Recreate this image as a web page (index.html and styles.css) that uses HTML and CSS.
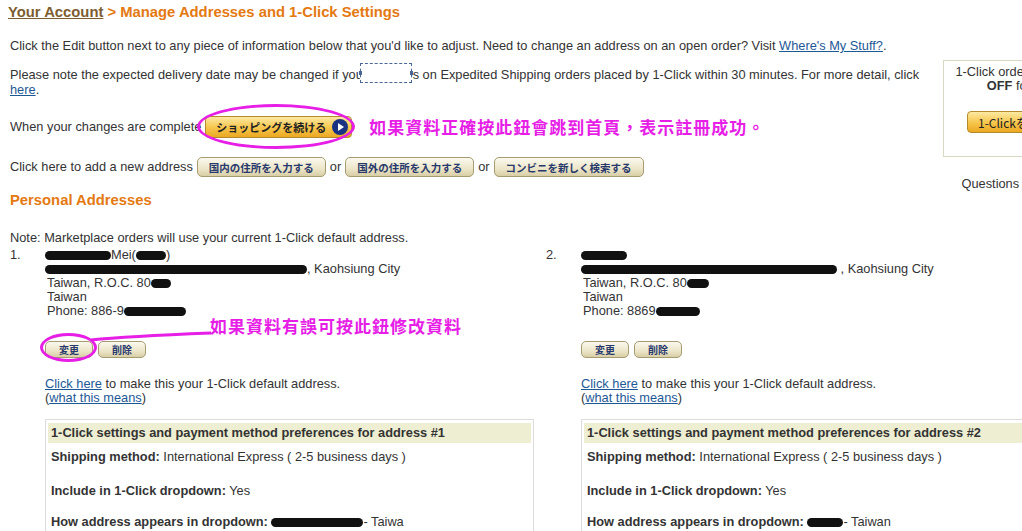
FILE: index.html
```html
<!DOCTYPE html>
<html lang="en">
<head>
    <meta charset="UTF-8">
    <title>Manage Addresses and 1-Click Settings</title>
    <link rel="stylesheet" href="styles.css">
</head>
<body>
<div class="page">

    <h1 class="crumb"><a href="#">Your Account</a> &gt; Manage Addresses and 1-Click Settings</h1>

    <div class="top">
        <div class="main">
            <p class="intro">Click the Edit button next to any piece of information below that you'd like to adjust. Need to change an address on an open order? Visit <a href="#">Where's My Stuff?</a>.</p>

            <p class="intro notice">Please note the expected delivery date may be changed if your changes on Expedited Shipping orders placed by 1-Click within 30 minutes. For more detail, click <a href="#">here</a>.<span class="marquee"></span></p>

            <div class="line done-line">
                <span>When your changes are complete</span>
                <span class="circled">
                    <button class="btn-gold">ショッピングを続ける <span class="go"></span></button>
                    <span class="ring ring-big"></span>
                </span>
                <span class="memo">如果資料正確按此鈕會跳到首頁，表示註冊成功。</span>
            </div>

            <div class="line add-line">
                <span>Click here to add a new address</span>
                <button class="btn-tan">国内の住所を入力する</button>
                <span>or</span>
                <button class="btn-tan">国外の住所を入力する</button>
                <span>or</span>
                <button class="btn-tan">コンビニを新しく検索する</button>
            </div>

            <h2 class="section">Personal Addresses</h2>
        </div>

        <div class="side">
            <div class="side-box">
                <p>1-Click ordering is currently<br><b>OFF</b> for this PC.</p>
                <button class="btn-gold small">1-Clickを有効にする</button>
            </div>
            <p class="side-q">Questions about 1-Click?</p>
        </div>
    </div>

    <p class="mp-note">Note: Marketplace orders will use your current 1-Click default address.</p>

    <div class="addresses">
        <!-- address #1 -->
        <div class="addr">
            <span class="num">1.</span>
            <div class="addr-body">
                <div class="addr-lines">
                    <div><span class="blob" style="width:66px"></span>Mei(<span class="blob" style="width:30px"></span>)</div>
                    <div><span class="blob" style="width:262px"></span>, Kaohsiung City</div>
                    <div class="ind">Taiwan, R.O.C. 80<span class="blob" style="width:20px"></span></div>
                    <div class="ind">Taiwan</div>
                    <div class="ind">Phone: 886-9<span class="blob" style="width:62px"></span></div>
                </div>
                <div class="edit-row">
                    <span class="circled">
                        <button class="btn-tan tiny">変更</button>
                        <span class="ring ring-small"></span>
                    </span>
                    <button class="btn-tan tiny">削除</button>
                    <svg class="pointer" width="124" height="14" viewBox="0 0 124 14">
                        <path d="M2 11 C 30 8, 70 6, 122 4" fill="none" stroke="#e61ee6" stroke-width="3"/>
                    </svg>
                    <span class="memo memo-edit">如果資料有誤可按此鈕修改資料</span>
                </div>
                <p class="default"><a href="#">Click here</a> to make this your 1-Click default address.<br>(<a href="#">what this means</a>)</p>
                <div class="settings">
                    <div class="settings-head">1-Click settings and payment method preferences for address #1</div>
                    <p><b>Shipping method:</b> International Express ( 2-5 business days )</p>
                    <p><b>Include in 1-Click dropdown:</b> Yes</p>
                    <p><b>How address appears in dropdown:</b> <span class="blob" style="width:92px"></span>- Taiwa</p>
                </div>
            </div>
        </div>

        <!-- address #2 -->
        <div class="addr">
            <span class="num">2.</span>
            <div class="addr-body">
                <div class="addr-lines">
                    <div><span class="blob" style="width:46px"></span></div>
                    <div><span class="blob" style="width:256px"></span> , Kaohsiung City</div>
                    <div class="ind">Taiwan, R.O.C. 80<span class="blob" style="width:22px"></span></div>
                    <div class="ind">Taiwan</div>
                    <div class="ind">Phone: 8869<span class="blob" style="width:44px"></span></div>
                </div>
                <div class="edit-row">
                    <button class="btn-tan tiny">変更</button>
                    <button class="btn-tan tiny">削除</button>
                </div>
                <p class="default"><a href="#">Click here</a> to make this your 1-Click default address.<br>(<a href="#">what this means</a>)</p>
                <div class="settings">
                    <div class="settings-head">1-Click settings and payment method preferences for address #2</div>
                    <p><b>Shipping method:</b> International Express ( 2-5 business days )</p>
                    <p><b>Include in 1-Click dropdown:</b> Yes</p>
                    <p><b>How address appears in dropdown:</b> <span class="blob" style="width:36px"></span>- Taiwan</p>
                </div>
            </div>
        </div>
    </div>

</div>
</body>
</html>
```

FILE: styles.css
```css
html {
    overflow: hidden;
}

body {
    margin: 0;
    font-family: "Liberation Sans", Arial, "Noto Sans CJK JP", sans-serif;
    font-size: 12.8px;
    line-height: 14px;
    color: #333;
    background: #fff;
}

a {
    color: #1d5896;
}

p {
    margin: 0;
}

.page {
    width: 1120px;
    padding: 4px 0 0 8px;
}

.crumb {
    margin: 0;
    font-size: 14.8px;
    line-height: 16px;
    color: #e47911;
}

.crumb a {
    color: #7d5d30;
}

.top {
    display: flex;
    margin-top: 19px;
}

.main {
    width: 925px;
    padding-left: 2px;
}

.notice {
    position: relative;
    margin-top: 14px;
    line-height: 15px;
}

.marquee {
    position: absolute;
    left: 350px;
    top: -4px;
    width: 50px;
    height: 18px;
    background: #fff;
    border: 1px dashed #4a6694;
}

.marquee::before,
.marquee::after {
    content: "";
    position: absolute;
    top: 7px;
    width: 3px;
    height: 4px;
    background: #4a6694;
}

.marquee::before {
    left: -2px;
}

.marquee::after {
    right: -2px;
}

.line {
    display: flex;
    align-items: center;
}

.done-line {
    margin-top: 18px;
    height: 24px;
}

.add-line {
    margin-top: 18px;
    height: 20px;
    gap: 4px;
}

.circled {
    position: relative;
    display: inline-flex;
    margin-left: 4px;
}

.ring {
    position: absolute;
    border: 3px solid #e61ee6;
    border-radius: 50%;
}

.ring-big {
    left: -8px;
    top: -12px;
    width: 152px;
    height: 39px;
}

.ring-small {
    left: -5px;
    top: -8px;
    width: 51px;
    height: 23px;
}

.memo {
    margin-left: 17px;
    font-family: "Noto Sans CJK TC", sans-serif;
    font-size: 17px;
    font-weight: bold;
    color: #e61ee6;
    letter-spacing: 1px;
}

button {
    font-family: "Noto Sans CJK JP", sans-serif;
    cursor: pointer;
}

.btn-gold {
    display: inline-flex;
    align-items: center;
    gap: 6px;
    height: 22px;
    padding: 0 3px 0 10px;
    border: 1px solid #b38b2d;
    border-radius: 4px;
    background: linear-gradient(#fde9a2, #f6c54a 55%, #eba823);
    color: #222;
    font-size: 11px;
    font-weight: bold;
}

.go {
    position: relative;
    width: 16px;
    height: 16px;
    border-radius: 50%;
    background: #1a3282;
}

.go::after {
    content: "";
    position: absolute;
    left: 6px;
    top: 4px;
    border-left: 6px solid #fff;
    border-top: 4px solid transparent;
    border-bottom: 4px solid transparent;
}

.btn-tan {
    height: 20px;
    padding: 0 11px;
    border: 1px solid #a69c72;
    border-radius: 5px;
    background: linear-gradient(#fbf9ef, #ece5c8 60%, #d8cea6);
    color: #27386c;
    font-size: 10.5px;
    font-weight: bold;
}

.btn-tan.tiny {
    height: 17px;
    width: 48px;
    padding: 0;
    font-size: 10px;
}

.section {
    margin: 15px 0 0;
    font-size: 14.8px;
    line-height: 16px;
    color: #e47911;
}

.side {
    margin: 21px 0 0 8px;
    width: 180px;
    text-align: center;
}

.side-box {
    height: 97px;
    padding-top: 4px;
    border: 1px solid #d9d8c4;
    box-sizing: border-box;
}

.side-box .small {
    margin-top: 18px;
    padding: 0 10px;
    font-weight: normal;
    font-size: 12px;
}

.side-q {
    margin-top: 20px;
}

.mp-note {
    margin-top: 23px;
    padding-left: 2px;
}

.addresses {
    display: grid;
    grid-template-columns: 536px 536px;
    margin-top: 3px;
    padding-left: 2px;
}

.addr {
    display: flex;
}

.num {
    width: 35px;
    flex: none;
}

.addr-body {
    flex: 1;
}

.ind {
    padding-left: 2px;
}

.blob {
    display: inline-block;
    height: 9px;
    vertical-align: -1px;
    background: #111;
    border-radius: 5px;
}

.edit-row {
    position: relative;
    display: flex;
    gap: 5px;
    margin-top: 23px;
}

.edit-row .circled {
    margin-left: 0;
}

.pointer {
    position: absolute;
    left: 44px;
    top: -12px;
}

.memo-edit {
    position: absolute;
    left: 165px;
    top: -22px;
    margin: 0;
}

.default {
    margin-top: 19px;
}

.settings {
    width: 489px;
    margin-top: 14px;
    padding: 3px 2px 20px;
    border: 1px solid #dcdcdc;
    box-sizing: border-box;
}

.settings-head {
    height: 20px;
    line-height: 20px;
    padding-left: 3px;
    background: #eeeed2;
    font-weight: bold;
}

.settings p {
    padding-left: 3px;
    margin-top: 7px;
}

.settings p + p {
    margin-top: 20px;
}

.settings p:last-child {
    margin-top: 17px;
}
```
